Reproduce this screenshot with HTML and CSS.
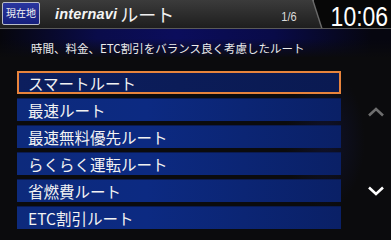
FILE: index.html
```html
<!DOCTYPE html>
<html lang="ja">
<head>
<meta charset="utf-8">
<link rel="stylesheet" href="styles.css">
</head>
<body>
<div class="screen">
  <header class="header">
    <div class="here-btn">現在地</div>
    <div class="title"><span class="brand">internavi</span><span class="title-jp">ルート</span></div>
    <div class="page"><span class="page-txt">1/6</span></div>
    <div class="clock"><span class="time">10:06</span></div>
  </header>
  <div class="desc">時間、料金、ETC割引をバランス良く考慮したルート</div>
  <main class="main">
    <ul class="list">
      <li class="item selected">スマートルート</li>
      <li class="item">最速ルート</li>
      <li class="item">最速無料優先ルート</li>
      <li class="item">らくらく運転ルート</li>
      <li class="item">省燃費ルート</li>
      <li class="item">ETC割引ルート</li>
    </ul>
    <div class="scroll">
      <svg class="chev up" width="18" height="10" viewBox="0 0 18 10"><path d="M2 8.5 L9 2 L16 8.5" fill="none" stroke="#6e6e6e" stroke-width="2.6"/></svg>
      <svg class="chev down" width="18" height="10" viewBox="0 0 18 10"><path d="M2 1.5 L9 8 L16 1.5" fill="none" stroke="#ffffff" stroke-width="2.6"/></svg>
    </div>
  </main>
</div>
</body>
</html>
```
FILE: styles.css
```css
* { box-sizing: border-box; margin: 0; padding: 0; }
html, body { width: 391px; height: 235px; overflow: hidden; }
body {
  background: #0b0b0d;
  font-family: "Noto Sans CJK JP", "Liberation Sans", sans-serif;
  color: #f2f2f2;
}
.screen {
  width: 391px;
  height: 235px;
  background: radial-gradient(ellipse 40px 70px at 325px 140px, rgba(20,25,80,0.45), rgba(0,0,0,0) 100%), #0b0b0d;
}
.header {
  height: 29px;
  display: flex;
  align-items: stretch;
  background: linear-gradient(#3b3b3b, #242424 80%, #1e1e1e);
  border-bottom: 1px solid #5a5a5a;
}
.here-btn {
  margin: 2px 0 3px 2px;
  width: 38px;
  border: 1px solid #b8bcc8;
  border-radius: 2px;
  background: linear-gradient(#2a36a0, #151f7c);
  font-size: 10px;
  line-height: 20px;
  text-align: center;
  color: #f4f4f4;
}
.title {
  display: flex;
  align-items: center;
  margin-left: 15px;
  flex: 1;
}
.brand {
  font-family: "Liberation Sans", sans-serif;
  font-weight: bold;
  font-style: italic;
  font-size: 14.5px;
  letter-spacing: 0.2px;
  color: #f4f4f4;
}
.title-jp {
  font-size: 18px;
  margin-left: 3px;
  color: #f0f0f0;
  line-height: 1;
}
.page {
  font-family: "Liberation Sans", sans-serif;
  font-size: 13px;
  color: #dcdcdc;
  align-self: center;
  margin-top: 5px;
  margin-right: 14px;
}
.page-txt {
  display: inline-block;
  transform: scaleX(0.85);
}
.clock {
  position: relative;
  width: 79px;
  flex-shrink: 0;
  display: flex;
  justify-content: flex-end;
  align-items: flex-start;
  padding-right: 3px;
}
.clock::before,
.clock::after {
  content: "";
  position: absolute;
  top: 0;
  bottom: 0;
  right: 0;
  clip-path: polygon(0 0, 100% 0, 100% 100%, 9px 100%);
}
.clock::before {
  left: 0;
  background: #6a6a6a;
}
.clock::after {
  left: 1.5px;
  background: #070707;
}
.time {
  position: relative;
  z-index: 1;
  display: inline-block;
  margin-top: 1px;
  font-family: "Liberation Sans", sans-serif;
  font-size: 28px;
  line-height: 32px;
  color: #ffffff;
  transform: scaleX(0.82);
  transform-origin: right center;
}
.desc {
  height: 28px;
  padding-left: 31px;
  padding-top: 12px;
  font-size: 11.5px;
  line-height: 14px;
  color: #ececec;
  background:
    linear-gradient(to bottom, rgba(11,11,13,0) 35%, rgba(11,11,13,0.95) 100%),
    linear-gradient(to right, #06060c 0%, #0a0c4a 25%, #0b0d5c 45%, #090b48 70%, #060610 95%);
}
.main {
  display: flex;
  padding-top: 14px;
}
.list {
  list-style: none;
  margin-left: 17px;
  width: 324px;
  display: flex;
  flex-direction: column;
  gap: 4px;
}
.item {
  height: 23px;
  padding-left: 11px;
  display: flex;
  align-items: center;
  font-size: 15.5px;
  color: #f2f2f2;
  background: linear-gradient(to right, #0d2a7c, #0c2a82 40%, #0a2066 100%);
  border-top: 1px solid #0a1a50;
}
.item.selected {
  border: 2px solid #e8843c;
  padding-left: 9px;
  background: linear-gradient(to right, #0c1e5e, #0a1a52);
}
.scroll {
  flex: 1;
  display: flex;
  flex-direction: column;
  align-items: center;
  padding-left: 20px;
}
.chev { display: block; }
.chev.up { margin-top: 36px; }
.chev.down { margin-top: 69px; }
```
